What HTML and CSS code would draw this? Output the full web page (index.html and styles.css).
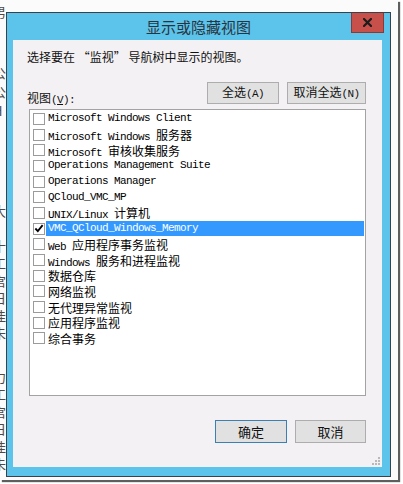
FILE: index.html
```html
<!DOCTYPE html>
<html lang="zh-CN">
<head>
<meta charset="utf-8">
<title>显示或隐藏视图</title>
<link rel="stylesheet" href="styles.css">
</head>
<body>
<div class="screen">
  <div class="bgpage">
    <div class="grp ga"><div>男</div></div>
    <div class="grp gb"><div>公</div><div>公</div><div>H</div></div>
    <div class="grp gc"><div>大</div></div>
    <div class="grp gd"><div>十</div><div>工</div><div>宫</div><div>日</div><div>佳</div><div>未</div></div>
    <div class="grp ge"><div>力</div><div>工</div><div>宫</div><div>日</div><div>佳</div><div>未</div></div>
  </div>

  <div class="dialog">
    <div class="titlebar">
      <span class="title">显示或隐藏视图</span>
      <span class="close">
        <svg width="9" height="9" viewBox="0 0 9 9"><path d="M1 1L8 8M8 1L1 8" stroke="#1c1c1c" stroke-width="2.2" stroke-linecap="square"/></svg>
      </span>
    </div>
    <div class="client">
      <div class="intro">选择要在 “监视” 导航树中显示的视图。</div>
      <div class="toolbar">
        <div class="label">视图<span class="a">(<u>V</u>):</span></div>
        <div class="btns">
          <button class="btn w72">全选<span class="a">(A)</span></button>
          <button class="btn w79">取消全选<span class="a">(N)</span></button>
        </div>
      </div>
      <div class="listbox">
        <div class="item"><span class="cb"></span><span class="txt">Microsoft Windows Client</span></div>
        <div class="item"><span class="cb"></span><span class="txt">Microsoft Windows <span class="c">服务器</span></span></div>
        <div class="item"><span class="cb"></span><span class="txt">Microsoft <span class="c">审核收集服务</span></span></div>
        <div class="item"><span class="cb"></span><span class="txt">Operations Management Suite</span></div>
        <div class="item"><span class="cb"></span><span class="txt">Operations Manager</span></div>
        <div class="item"><span class="cb"></span><span class="txt">QCloud_VMC_MP</span></div>
        <div class="item"><span class="cb"></span><span class="txt">UNIX/Linux <span class="c">计算机</span></span></div>
        <div class="item sel"><span class="cb"><svg width="11" height="11" viewBox="0 0 11 11"><path d="M1.5 5.5L4.2 8.3L9.5 1.8" fill="none" stroke="#000" stroke-width="2"/></svg></span><span class="txt">VMC_QCloud_Windows_Memory</span></div>
        <div class="item"><span class="cb"></span><span class="txt">Web <span class="c">应用程序事务监视</span></span></div>
        <div class="item"><span class="cb"></span><span class="txt">Windows <span class="c">服务和进程监视</span></span></div>
        <div class="item"><span class="cb"></span><span class="txt"><span class="c">数据仓库</span></span></div>
        <div class="item"><span class="cb"></span><span class="txt"><span class="c">网络监视</span></span></div>
        <div class="item"><span class="cb"></span><span class="txt"><span class="c">无代理异常监视</span></span></div>
        <div class="item"><span class="cb"></span><span class="txt"><span class="c">应用程序监视</span></span></div>
        <div class="item"><span class="cb"></span><span class="txt"><span class="c">综合事务</span></span></div>
      </div>
      <div class="footer">
        <button class="btn btn-lg default w72">确定</button>
        <button class="btn btn-lg w71">取消</button>
      </div>
      <svg class="grip" width="8" height="8" viewBox="0 0 8 8">
        <g fill="#b9b9b9">
          <rect x="6" y="0" width="2" height="2"/>
          <rect x="3" y="3" width="2" height="2"/><rect x="6" y="3" width="2" height="2"/>
          <rect x="0" y="6" width="2" height="2"/><rect x="3" y="6" width="2" height="2"/><rect x="6" y="6" width="2" height="2"/>
        </g>
      </svg>
    </div>
  </div>
</div>
</body>
</html>
```

FILE: styles.css
```css
html, body {
  margin: 0;
  padding: 0;
}
body {
  width: 403px;
  height: 484px;
  overflow: hidden;
  background: #ffffff;
  font-family: "Noto Sans CJK SC", "Noto Sans", sans-serif;
}
.screen {
  position: relative;
  width: 398px;
  height: 480px;
  background: #fbfbfb;
  box-shadow: 2px 2px 1px rgba(40, 40, 40, 0.75);
  overflow: hidden;
}

/* background page fragments peeking out on the left */
.bgpage {
  margin-left: -7px;
  width: 14px;
  color: #4a4a4a;
  font-size: 13px;
}
.grp div { height: 17.5px; line-height: 17.5px; }
.ga { padding-top: 3px; }
.gb { margin-top: 42px; }
.gb div { height: 19px; line-height: 19px; }
.gc { margin-top: 82px; }
.gd { margin-top: 17.5px; }
.ge { margin-top: 26px; }

/* dialog window */
.dialog {
  position: absolute;
  left: 6px;
  top: 12px;
  width: 385px;
  height: 465px;
  box-sizing: border-box;
  border: 1px solid #3a4148;
  background: #5cc3ea;
  display: flex;
  flex-direction: column;
}
.titlebar {
  position: relative;
  height: 27px;
  flex: none;
  text-align: center;
}
.title {
  display: inline-block;
  padding-top: 4px;
  font-size: 15px;
  line-height: 20px;
  color: #2a3440;
}
.close {
  position: absolute;
  right: 6px;
  top: 0;
  width: 33px;
  height: 20px;
  box-sizing: border-box;
  background: #c7514a;
  border: 1px solid #8a3a35;
  border-top: none;
  display: flex;
  align-items: center;
  justify-content: center;
}

.client {
  position: relative;
  margin: 0 8px 0 6px;
  height: 427px;
  box-sizing: border-box;
  background: #f4f1f4;
  padding: 10px 16px 0 14px;
  display: flex;
  flex-direction: column;
  font-size: 12px;
  color: #111;
}
.intro {
  line-height: 14px;
  height: 14px;
  white-space: nowrap;
}
.a {
  font-family: "Liberation Mono", monospace;
  font-size: 11px;
  letter-spacing: -0.6px;
}
.toolbar {
  margin-top: 18px;
  height: 25px;
  display: flex;
  justify-content: space-between;
}
.label {
  align-self: flex-end;
  line-height: 14px;
}
.btns {
  display: flex;
  gap: 8px;
  align-self: flex-start;
}
.btn {
  height: 22px;
  box-sizing: border-box;
  background: #e1e1e1;
  border: 1px solid #adadad;
  padding: 0;
  margin: 0;
  font-family: "Noto Sans CJK SC", sans-serif;
  font-size: 12px;
  color: #111;
  line-height: 18px;
}
.btn-lg { height: 23px; font-size: 13px; }
.default { border-color: #3c7fb1; }
.w72 { width: 72px; }
.w79 { width: 79px; }
.w71 { width: 71px; }

.listbox {
  margin-top: 2px;
  margin-left: 2px;
  height: 287px;
  box-sizing: border-box;
  border: 1px solid #a3a3a3;
  background: #ffffff;
  padding: 1px 1px 0 3px;
  font-family: "Liberation Mono", monospace;
  font-size: 11px;
  letter-spacing: -0.6px;
  color: #000;
}
.item {
  height: 15.7px;
  display: flex;
  align-items: center;
}
.cb {
  width: 12px;
  height: 12px;
  box-sizing: border-box;
  border: 1px solid #9b9b9b;
  background: #fff;
  flex: none;
  margin-right: 1px;
  display: flex;
  align-items: center;
  justify-content: center;
}
.txt {
  flex: 1;
  height: 15px;
  line-height: 15px;
  padding-left: 2px;
  white-space: nowrap;
}
.c {
  font-family: "Noto Sans CJK SC", sans-serif;
  font-size: 12px;
  letter-spacing: 0;
}
.sel .txt {
  background: #3399ff;
  color: #ffffff;
}
.footer {
  margin-top: 24px;
  display: flex;
  justify-content: flex-end;
  gap: 8px;
}
.grip {
  position: absolute;
  right: 2px;
  bottom: 2px;
}
```
